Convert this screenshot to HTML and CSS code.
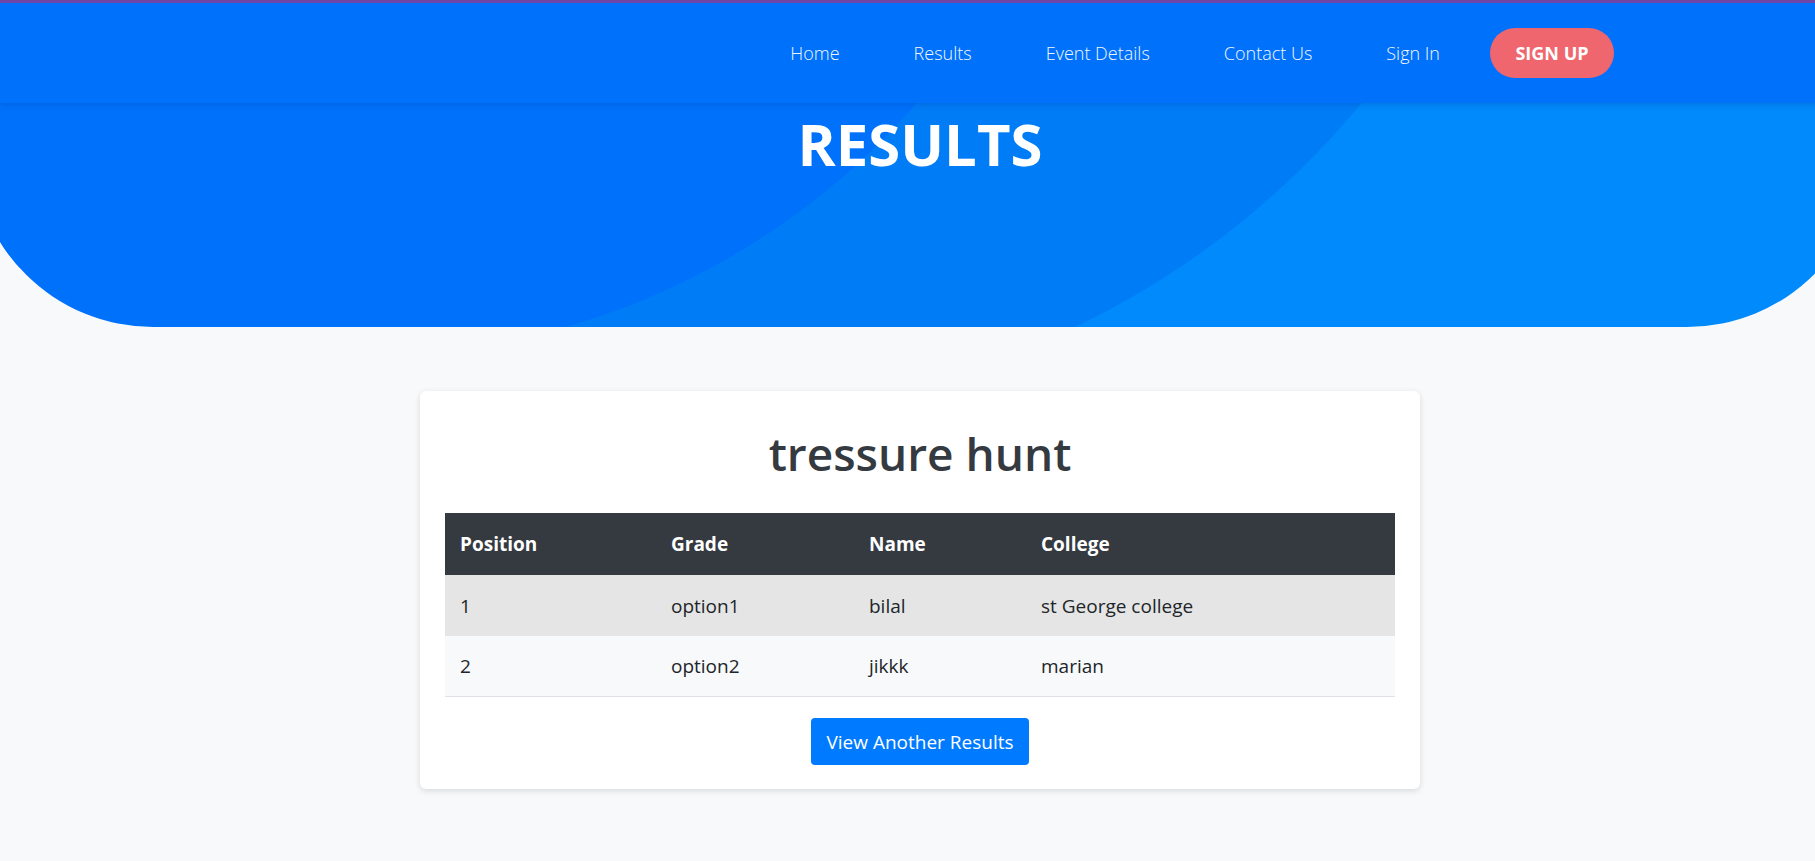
FILE: index.html
```html
<!DOCTYPE html>
<html lang="en">
<head>
<meta charset="utf-8">
<title>Results</title>
<link rel="stylesheet" href="styles.css">
</head>
<body>
<div class="page">
  <header class="navbar">
    <nav class="nav">
      <a class="nav-link" href="#">Home</a>
      <a class="nav-link" href="#">Results</a>
      <a class="nav-link" href="#">Event Details</a>
      <a class="nav-link" href="#">Contact Us</a>
      <a class="nav-link" href="#">Sign In</a>
      <a class="btn-signup" href="#">SIGN UP</a>
    </nav>
  </header>
  <section class="hero">
    <h1 class="hero-title">RESULTS</h1>
  </section>
  <main class="content">
    <div class="card">
      <h2 class="card-title">tressure hunt</h2>
      <table class="results">
        <colgroup>
          <col class="col-pos">
          <col class="col-grade">
          <col class="col-name">
          <col class="col-college">
        </colgroup>
        <thead>
          <tr><th>Position</th><th>Grade</th><th>Name</th><th>College</th></tr>
        </thead>
        <tbody>
          <tr class="row-hl"><td>1</td><td>option1</td><td>bilal</td><td>st George college</td></tr>
          <tr class="row-alt"><td>2</td><td>option2</td><td>jikkk</td><td>marian</td></tr>
        </tbody>
      </table>
      <div class="actions">
        <a class="btn-primary" href="#">View Another Results</a>
      </div>
    </div>
  </main>
</div>
</body>
</html>
```
FILE: styles.css
```css
html, body {
  margin: 0;
  padding: 0;
  overflow-x: hidden;
}
body {
  background: #f8f9fa;
  font-family: "Open Sans", "Noto Sans", sans-serif;
  color: #212529;
}
.page {
  width: 1840px;
}
.navbar {
  position: relative;
  z-index: 5;
  height: 100px;
  border-top: 3px solid #6f45a8;
  background: #0071fb;
  box-shadow: 0 2px 6px rgba(0, 40, 120, 0.18);
  display: flex;
  align-items: center;
  justify-content: flex-end;
  padding-right: 226px;
}
.nav {
  display: flex;
  align-items: center;
}
.nav-link {
  color: #f2f7ff;
  text-decoration: none;
  font-size: 18px;
  font-weight: 300;
  padding: 0 37px;
}
.btn-signup {
  margin-left: 13px;
  display: flex;
  align-items: center;
  justify-content: center;
  width: 124px;
  height: 50px;
  border-radius: 25px;
  background: #f0666e;
  color: #fff;
  font-weight: 700;
  font-size: 18px;
  text-decoration: none;
}
.hero {
  position: relative;
  overflow: hidden;
  height: 224px;
  margin: 0 -27px;
  background: linear-gradient(90deg, #0071fa 0, #0071fa 520px, #008afb 520px);
  border-radius: 0 0 180px 180px;
  text-align: center;
}
.hero::before {
  content: "";
  position: absolute;
  left: -108px;
  top: -1383px;
  width: 1690px;
  height: 1690px;
  border-radius: 50%;
  background: #007cf7;
}
.hero::after {
  content: "";
  position: absolute;
  left: -338px;
  top: -1208px;
  width: 1460px;
  height: 1460px;
  border-radius: 50%;
  background: #0071fa;
}
.hero-title {
  position: relative;
  z-index: 1;
  margin: 0;
  padding-top: 2px;
  color: #fff;
  font-size: 58px;
  font-weight: 700;
  line-height: 1.36;
}
.content {
  display: flex;
  justify-content: center;
  padding-top: 64px;
  padding-bottom: 60px;
}
.card {
  width: 950px;
  background: #fff;
  border-radius: 6px;
  box-shadow: 0 2px 6px rgba(0, 0, 0, 0.13);
  padding: 24px 25px;
}
.card-title {
  margin: 0 0 24px;
  text-align: center;
  font-size: 46px;
  font-weight: 600;
  color: #343a40;
  line-height: 72px;
  padding-top: 2px;
}
.results {
  width: 100%;
  border-collapse: collapse;
  font-size: 19px;
}
.col-pos { width: 211px; }
.col-grade { width: 198px; }
.col-name { width: 172px; }
.results th,
.results td {
  text-align: left;
  padding: 0 15px;
  line-height: 27px;
}
.results th {
  background: #343a40;
  color: #fff;
  font-weight: 700;
  height: 62px;
}
.results td {
  height: 60px;
}
.row-hl td {
  background: #e5e5e5;
  border-top: 1px solid #e5e5e5;
}
.row-alt td {
  background: #f8f9fa;
  border-bottom: 1px solid #dee2e6;
}
.actions {
  display: flex;
  justify-content: center;
  margin-top: 21px;
}
.btn-primary {
  display: inline-flex;
  align-items: center;
  justify-content: center;
  height: 47px;
  padding: 0 15px;
  background: #007bff;
  color: #fff;
  border-radius: 4px;
  font-size: 19px;
  text-decoration: none;
}
```
